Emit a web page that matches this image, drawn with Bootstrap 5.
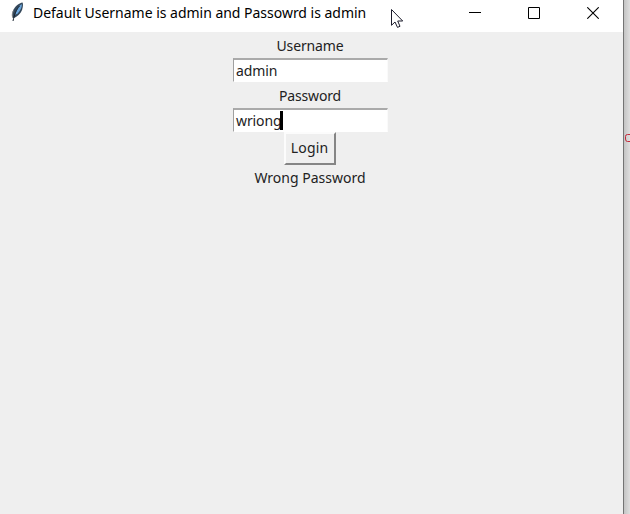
<!DOCTYPE html>
<html lang="en">
<head>
<meta charset="utf-8">
<meta name="viewport" content="width=device-width, initial-scale=1">
<title>Default Username is admin and Passowrd is admin</title>
<link href="https://cdn.jsdelivr.net/npm/bootstrap@5.3.0/dist/css/bootstrap.min.css" rel="stylesheet">
<style>
body{font-family:"Noto Sans","Open Sans",sans-serif;font-size:14px;color:#222;background:#dcdcdc}
.app-window{width:624px;background:#efefef;border-right:1px solid #747474}
.title-bar{height:32px;background:#fff;padding-left:9px;padding-right:1px}
.title-text{font-size:14px;line-height:20px;color:#000;letter-spacing:-.02px;margin:-6px 0 0 8px}
.feather{margin-top:-8px}
.win-btn{width:59px;height:32px;padding:7px 0 0;border:0;background:none;line-height:0}
.win-btn svg{display:block;margin:0 auto}
.win-btn-min{padding-left:1px}
.login-form{width:155px;margin-left:233px;padding-top:1px}
.tk-label{height:25px;line-height:25px;letter-spacing:-.15px;white-space:nowrap;margin-left:-1px}
.tk-label-tall{height:26px;line-height:27px}
.tk-label-wide{letter-spacing:0}
.tk-entry{height:24px;line-height:22px;background:#fff;border:1px solid #fff;border-top:2px solid #aaa;border-left:1px solid #a0a0a0;border-right-color:#fafafa;padding-left:2px;letter-spacing:-.1px}
.caret{width:3px;height:19px;background:#000;margin-top:1px;margin-left:-2px}
.tk-button{width:52px;height:33px;line-height:27px;padding:0 1px 2px 0;margin-left:51px;background:#efefef;color:#222;border:2px solid;border-color:#fcfcfc #858585 #858585 #fcfcfc;letter-spacing:.15px}
.page-behind{width:6px;background:linear-gradient(90deg,#c4c4c4,#dedede);padding-top:134px;overflow:hidden}
.pointer{left:390px;top:8px}
</style>
</head>
<body class="vh-100 overflow-hidden">
<div class="d-flex h-100">
  <main class="app-window flex-shrink-0">
    <header class="title-bar d-flex align-items-center">
      <svg class="feather" width="16" height="20" viewBox="0 0 16 20"><path d="M13.600.600C10 1 5.500 4.800 3.800 9.200 2.800 12 3 14.500 4 16.500 8 15 11.800 11.500 13.200 7.500 14 4.500 14.300 2.500 13.600.600Z" fill="#34475a"/><path d="M12.800 2C9.500 4 7 8 6 12.800L8.500 11.700C11.500 8.500 13.200 5 12.800 2Z" fill="#6ba6dc"/><path d="M10.500 4C7.500 7.500 5.500 12 4 19" fill="none" stroke="#15202c" stroke-width="1"/><path d="M4.500 8.500C3.100 11 2.900 13.500 3.700 15.500" fill="none" stroke="#888" stroke-width=".8"/></svg>
      <div class="title-text text-nowrap">Default Username is admin and Passowrd is admin</div>
      <div class="d-flex ms-auto">
        <button class="win-btn win-btn-min d-flex align-items-start" aria-label="Minimize"><svg width="12" height="12"><path d="M0 5.500H12" stroke="#000"/></svg></button>
        <button class="win-btn d-flex align-items-start" aria-label="Maximize"><svg width="12" height="12"><path d="M.5.500h11v11H.5z" fill="none" stroke="#000"/></svg></button>
        <button class="win-btn d-flex align-items-start" aria-label="Close"><svg width="12" height="12"><path d="M.3.300 11.700 11.700M11.700.300.300 11.700" stroke="#000" stroke-width="1.100"/></svg></button>
      </div>
    </header>
    <section class="login-form text-center">
      <div class="tk-label">Username</div>
      <div class="tk-entry text-start">admin</div>
      <div class="tk-label tk-label-tall">Password</div>
      <div class="tk-entry d-flex"><span>wriong</span><span class="caret"></span></div>
      <button class="tk-button d-block">Login</button>
      <div class="tk-label tk-label-wide">Wrong Password</div>
    </section>
  </main>
  <aside class="page-behind"><svg class="d-block" width="6" height="8" viewBox="0 0 6 8"><path d="M7 .5H3.500Q1.500.500 1.500 2.500V5Q1.500 7.500 3.500 7.500H7" fill="none" stroke="#c5283a"/></svg></aside>
</div>
<svg class="pointer position-absolute" width="14" height="21" viewBox="0 0 14 21"><path d="M1.500 1.500V17.300L5 14 7.500 19.400 10 18.300 7.700 13H12.700Z" fill="#fff" stroke="#1b1b2b"/></svg>
<script src="https://cdn.jsdelivr.net/npm/bootstrap@5.3.0/dist/js/bootstrap.bundle.min.js"></script>
</body>
</html>
